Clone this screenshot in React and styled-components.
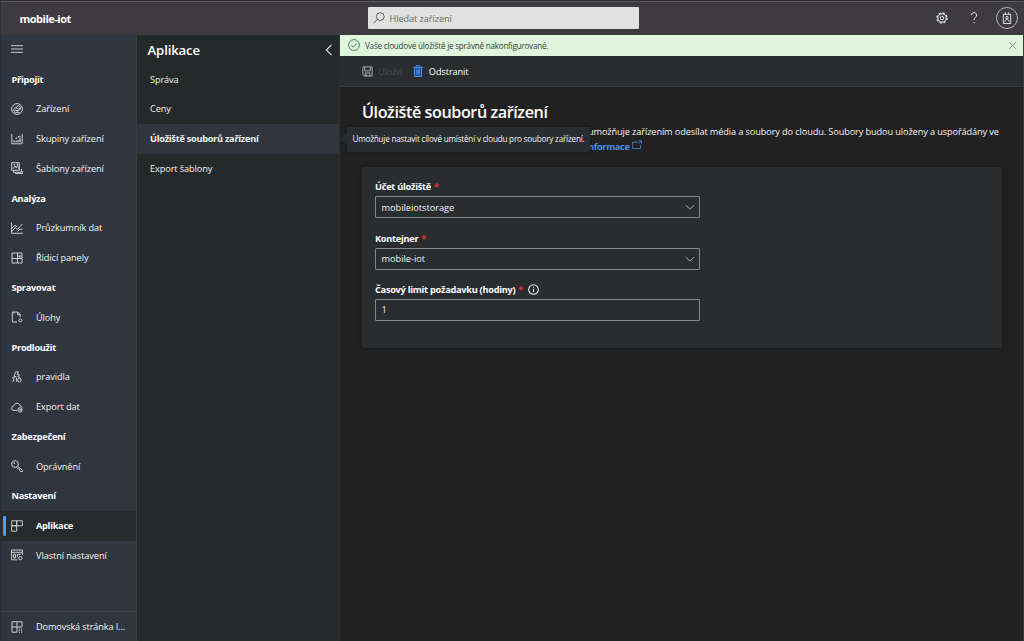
import React from "react";
import styled, { createGlobalStyle, css } from "styled-components";

const GlobalStyle = createGlobalStyle`
  * {
    box-sizing: border-box;
  }

  body {
    margin: 0;
    overflow: hidden;
    background: #212121;
    color: #f3f2f1;
    font-family: "Open Sans", "Noto Sans", sans-serif;
    font-size: 9.2px;
  }
`;

const Page = styled.div`
  width: 1024px;
  height: 641px;
  display: flex;
  flex-direction: column;
  border-top: 1px solid #2b2b2d;
  border-left: 1px solid #26303a;
  border-right: 1px solid #3c3c3e;
`;

const Header = styled.header`
  height: 33.5px;
  flex: none;
  display: flex;
  align-items: center;
  justify-content: space-between;
  background: #3e3b40;
  border-top: 1px solid #5d5b5b;
  padding: 0 5px 0 18.5px;
`;

const Brand = styled.div`
  width: 348px;
  font-size: 11px;
  font-weight: 700;
  color: #fff;
  letter-spacing: -0.5px;
`;

const SearchBox = styled.div`
  width: 271px;
  height: 22px;
  display: flex;
  align-items: center;
  gap: 5px;
  padding-left: 5px;
  background: #e1e1e1;
  border-radius: 1px;
  color: #6a6a6a;
  letter-spacing: -0.08px;
`;

const HeaderTools = styled.div`
  flex: 1;
  display: flex;
  align-items: center;
  justify-content: flex-end;
  gap: 20px;
`;

const Avatar = styled.div`
  width: 22px;
  height: 22px;
  margin-left: -4px;
  display: flex;
  align-items: center;
  justify-content: center;
  border: 1px solid #b5b4b5;
  border-radius: 50%;
`;

const Body = styled.div`
  flex: 1;
  min-height: 0;
  display: flex;
`;

const Sidebar = styled.nav`
  width: 136px;
  flex: none;
  display: flex;
  flex-direction: column;
  background: #30363f;
  border-right: 1px solid #3a3d41;
`;

const SideRow = styled.div`
  height: 29.78px;
  flex: none;
  display: flex;
  align-items: center;
  position: relative;
  padding-left: 10px;
  white-space: nowrap;
  letter-spacing: -0.08px;

  svg {
    margin-right: 13px;
    flex: none;
  }

  ${(props) =>
    props.$heading &&
    css`
      padding-left: 10.5px;
      font-weight: 700;
      color: #fff;
      letter-spacing: -0.27px;
    `}

  ${(props) =>
    props.$active &&
    css`
      background: #272b2d;
      font-weight: 700;
      color: #fff;
      letter-spacing: -0.27px;

      &::before {
        content: "";
        position: absolute;
        left: 2px;
        top: 5px;
        width: 3px;
        height: 20px;
        border-radius: 1px;
        background: #4e9df5;
      }
    `}

  ${(props) =>
    props.$bottom &&
    css`
      margin-top: auto;
      border-top: 1px solid #3d4247;
      letter-spacing: -0.13px;
    `}
`;

const SubPanel = styled.section`
  width: 203px;
  flex: none;
  background: #25292a;
  border-right: 1px solid #2e3132;
`;

const SubTitle = styled.div`
  height: 29.78px;
  display: flex;
  align-items: center;
  justify-content: space-between;
  padding: 2px 4.5px 0 10.5px;
  font-size: 13.2px;
  font-weight: 600;
  color: #fff;
  letter-spacing: -0.15px;
`;

const SubItem = styled.div`
  height: 29.78px;
  display: flex;
  align-items: center;
  padding-left: 13px;
  letter-spacing: ${(props) => (props.$active ? "-0.27px" : "-0.1px")};
  background: ${(props) => (props.$active ? "#30363f" : "transparent")};
  font-weight: ${(props) => (props.$active ? 700 : 400)};
`;

const Main = styled.main`
  flex: 1;
  min-width: 0;
  position: relative;
`;

const Banner = styled.div`
  height: 21.5px;
  display: flex;
  align-items: center;
  gap: 5px;
  padding: 0 6px 0 8px;
  background: #dff6dd;
  color: #3b3d3b;
  font-size: 8.1px;
  letter-spacing: -0.22px;

  svg:last-child {
    margin-left: auto;
  }
`;

const Toolbar = styled.div`
  height: 31px;
  display: flex;
  align-items: center;
  padding-left: 22px;
  background: #292d30;
  border-bottom: 1px solid #3b3a39;
`;

const ToolButton = styled.div`
  display: flex;
  align-items: center;
  gap: 5px;
  margin-right: 10px;
  letter-spacing: -0.1px;
  color: ${(props) => (props.$disabled ? "#494c4e" : "#fff")};
`;

const Content = styled.div`
  padding: 13px 21px 0 22px;
`;

const Heading = styled.h1`
  margin: 0;
  height: 25px;
  line-height: 24px;
  font-size: 16.2px;
  font-weight: 600;
  color: #fff;
  letter-spacing: -0.44px;
`;

const Description = styled.p`
  margin: 0;
  padding-left: 226px;
  line-height: 14.6px;
  white-space: nowrap;
  letter-spacing: -0.112px;
`;

const Link = styled.a`
  color: #4a90ec;
  font-weight: 700;
  letter-spacing: -0.33px;

  svg {
    margin-left: 2px;
  }
`;

const Card = styled.div`
  width: 639.5px;
  height: 181px;
  margin-top: 13px;
  padding: 13px;
  background: #292d30;
  border-radius: 2px;
  box-shadow: 0 1px 4px rgba(0, 0, 0, 0.3);
`;

const Field = styled.div`
  width: 325px;
  height: 51.4px;
`;

const Label = styled.div`
  height: 16px;
  display: flex;
  align-items: center;
  gap: 3px;
  padding-bottom: 2.5px;
  font-weight: 700;
  color: #fff;
  letter-spacing: -0.26px;
  white-space: nowrap;

  svg {
    margin-left: 2px;
  }
`;

const Required = styled.span`
  color: #e8302e;
`;

const Control = styled.div`
  height: 22px;
  display: flex;
  align-items: center;
  justify-content: space-between;
  padding: 0 4px 0 5.5px;
  border: 1px solid #8a8886;
  border-radius: 1px;
`;

const Tooltip = styled.div`
  position: absolute;
  left: 7px;
  top: 92.5px;
  width: 243px;
  height: 24.5px;
  display: flex;
  align-items: center;
  padding: 0 0 1px 5.5px;
  background: #292d30;
  box-shadow: 0 0 4px rgba(0, 0, 0, 0.35);
  font-size: 8.1px;
  letter-spacing: -0.19px;
  white-space: nowrap;

  &::before {
    content: "";
    position: absolute;
    left: -6px;
    top: 6px;
    border: 6px solid transparent;
    border-left-width: 0;
    border-right-color: #292d30;
  }
`;

const paths = {
  menu: <path d="M0 2.7h12M0 6h12M0 9.3h12" />,
  devices: (
    <>
      <circle cx="6" cy="6" r="5.4" />
      <circle cx="7.5" cy="4.4" r="1.7" />
      <circle cx="4.9" cy="8.5" r="1.4" />
      <path d="M5.9 4.4 3.5 5.4 2 8M6 7.6l2.6-.6 1.6-2.4M6.2 9.2l2.3.4" />
    </>
  ),
  groups: (
    <>
      <path d="M.8 1v9.8h10.4V1" />
      <path d="M3 7.2v2M5.2 4.6v1.5M5.2 7.6v1.6M7.2 7.2v2M9 2.8v1.5M9 5.6v3.6M6.8 4h1.2" strokeWidth="1.3" />
    </>
  ),
  templates: (
    <>
      <path d="M.7.7h7.6v7.6H.7zM2.5 8.5v1.8h7.8V7M4.5 10.5v1h7.2V9" />
      <path d="m2 6.8 2-3 1.2 2 1.3-2 1.2 3M2.6 2.6h1.4M5.5 2.2H7v1.6" />
    </>
  ),
  explorer: <path d="M.6.5v10.8H12M.8 9.5l3.5-4 2 2L11.3 2M1 6l3-2.5 2.3 1.2M6.5 9.5l2-2 2.8-.5" />,
  dashboards: <path d="M1 1h10v10H1zM6.5 1v10M1 6.5h10M6.5 4H11M8.8 4v2.5" />,
  jobs: (
    <>
      <path d="M6 11H1.3V1h5.4l2.5 2.5V6M6.7 1v2.7h2.5M3 1v1.5" />
      <circle cx="9.4" cy="9.4" r="1.5" />
    </>
  ),
  rules: (
    <>
      <path d="M2.8 5.5 4.8.8h2.7L6.2 3.7h2.2L6.6 6M2.8 5.5h2L3.4 7H1.4l1.8 1.7L1.6 11" />
      <circle cx="8.4" cy="9.2" r="1.8" />
      <path d="M5.6 6.5v4.2M7 6.2h2.2" />
    </>
  ),
  exportData: (
    <>
      <path d="M6 9.4H2.8a2.2 2.2 0 0 1 0-4.4C3 3.3 4.4 2.3 6 2.3c1.8 0 3 1 3.3 2.7 1 0 1.9.6 2 1.6" />
      <circle cx="9" cy="8.9" r="2.2" />
      <path d="M7.5 8.9h2.8M9.3 7.8l1.1 1.1-1.1 1.1" />
    </>
  ),
  key: (
    <>
      <circle cx="4" cy="4" r="3.4" />
      <path d="m6.6 6.3 4.8 4v1.2H9.6L8.5 10.2V9.1H7.4L5.6 7.3" />
      <circle cx="3.2" cy="3.2" r=".5" />
    </>
  ),
  app: <path d="M.7.8h5v5h-5zM.7 5.8h5v5.4h-5zM5.7.8h5.6v5H5.7z" />,
  settings: (
    <>
      <path d="M11.4 6V1H.6v9.8h5.8M.6 3.3h10.8M2.5 5.3h2v3.5h-2zM6 5.3h3.8M6.4 5.3v3" />
      <circle cx="9.3" cy="9.2" r="1.7" />
    </>
  ),
  home: (
    <>
      <path d="M11 5.8V.8H1v10.4h5M6 .8v10.4M1 6h10" />
      <path d="M7.8 8h1.2M10 8h1.2M7.8 9.6h1.2M10 9.6h1.2M7.8 11.2h1.2M10 11.2h1.2" />
    </>
  ),
  search: (
    <>
      <circle cx="7.3" cy="4.6" r="3.9" />
      <path d="M4.4 7.3.6 11.2" />
    </>
  ),
  gear: (
    <>
      <circle cx="6" cy="6" r="5" strokeWidth="1.4" strokeDasharray="2.1 1.827" />
      <circle cx="6" cy="6" r="4.1" />
      <circle cx="6" cy="6" r="1.8" />
    </>
  ),
  help: (
    <>
      <path d="M3.4 3.3C3.5 1.6 4.6.6 6 .6s2.6 1 2.6 2.5C8.6 5.4 6 5.6 6 8.2" />
      <path d="M6 10.2v1.2" />
    </>
  ),
  badge: (
    <>
      <path d="M2.3 2.3h7.4v9.2H2.3zM4.3.3v2.6M7.7.3v2.6" />
      <circle cx="6" cy="5.6" r="1.2" />
      <path d="M4 9.8c0-3.4 4-3.4 4 0" />
    </>
  ),
  back: <path d="M8.5.8 3.3 6l5.2 5.2" />,
  check: (
    <>
      <circle cx="6" cy="6" r="5.4" />
      <path d="m3.2 6.2 2 2 3.8-4" />
    </>
  ),
  close: <path d="m1.5 1.5 9 9M10.5 1.5l-9 9" />,
  save: <path d="M1 1h10v10H2.5L1 9.5zM3 1v4.3h6V1M3.5 11V7.5h5V11M5 9v2" />,
  trash: (
    <>
      <path d="M2.4 2.5h7.2v9H2.4z" fill="#24549c" />
      <path d="M1 2.4h10M4.2 2.2V.6h3.6v1.6M4.7 4.5v5M6 4.5v5M7.3 4.5v5" />
    </>
  ),
  external: <path d="M7 2.5H.8v7.8h9.5V6M8 1h3.3v3.3M11 1.2 8 4.2" />,
  down: <path d="m1 3.7 5 5 5-5" />,
  info: (
    <>
      <circle cx="6" cy="6" r="5.3" />
      <path d="M6 5.2V9M6 3v1.1" />
    </>
  ),
};

function Icon({ name, size = 12, color = "#d4d5d6", weight = 0.95 }) {
  return (
    <svg width={size} height={size} viewBox="0 0 12 12" fill="none" stroke={color} strokeWidth={weight}>
      {paths[name]}
    </svg>
  );
}

const sideItems = [
  { title: "Připojit" },
  { title: "Zařízení", icon: "devices" },
  { title: "Skupiny zařízení", icon: "groups" },
  { title: "Šablony zařízení", icon: "templates" },
  { title: "Analýza" },
  { title: "Průzkumník dat", icon: "explorer" },
  { title: "Řídicí panely", icon: "dashboards" },
  { title: "Spravovat" },
  { title: "Úlohy", icon: "jobs" },
  { title: "Prodloužit" },
  { title: "pravidla", icon: "rules" },
  { title: "Export dat", icon: "exportData" },
  { title: "Zabezpečení" },
  { title: "Oprávnění", icon: "key" },
  { title: "Nastavení" },
  { title: "Aplikace", icon: "app", active: true },
  { title: "Vlastní nastavení", icon: "settings" },
];

const subItems = ["Správa", "Ceny", "Úložiště souborů zařízení", "Export šablony"];

export default function App() {
  const sideRows = sideItems.map((item) => (
    <SideRow key={item.title} $heading={!item.icon} $active={item.active}>
      {item.icon && <Icon name={item.icon} />}
      {item.title}
    </SideRow>
  ));

  return (
    <Page>
      <GlobalStyle />
      <Header>
        <Brand>mobile-iot</Brand>
        <SearchBox>
          <Icon name="search" color="#555" />
          Hledat zařízení
        </SearchBox>
        <HeaderTools>
          <Icon name="gear" color="#e8e8e8" />
          <Icon name="help" color="#e8e8e8" />
          <Avatar>
            <Icon name="badge" color="#e8e8e8" />
          </Avatar>
        </HeaderTools>
      </Header>

      <Body>
        <Sidebar>
          <SideRow>
            <Icon name="menu" />
          </SideRow>
          {sideRows}
          <SideRow $bottom>
            <Icon name="home" />
            Domovská stránka I...
          </SideRow>
        </Sidebar>

        <SubPanel>
          <SubTitle>
            Aplikace
            <Icon name="back" size={12} color="#e8e8e8" weight={1.1} />
          </SubTitle>
          {subItems.map((title) => (
            <SubItem key={title} $active={title === "Úložiště souborů zařízení"}>
              {title}
            </SubItem>
          ))}
        </SubPanel>

        <Main>
          <Banner>
            <Icon name="check" color="#46814a" />
            Vaše cloudové úložiště je správně nakonfigurované.
            <Icon name="close" size={9} color="#6b736b" />
          </Banner>
          <Toolbar>
            <ToolButton $disabled>
              <Icon name="save" color="#b9b6bd" size={11} />
              Uložit
            </ToolButton>
            <ToolButton>
              <Icon name="trash" color="#4a90ec" />
              Odstranit
            </ToolButton>
          </Toolbar>
          <Content>
            <Heading>Úložiště souborů zařízení</Heading>
            <Description>
              umožňuje zařízením odesílat média a soubory do cloudu. Soubory budou uloženy a uspořádány ve
              <br />
              <Link>
                nformace
                <Icon name="external" color="#4a90ec" size={10} />
              </Link>
            </Description>
            <Card>
              <Field>
                <Label>
                  Účet úložiště <Required>*</Required>
                </Label>
                <Control>
                  mobileiotstorage
                  <Icon name="down" size={10} />
                </Control>
              </Field>
              <Field>
                <Label>
                  Kontejner <Required>*</Required>
                </Label>
                <Control>
                  mobile-iot
                  <Icon name="down" size={10} />
                </Control>
              </Field>
              <Field>
                <Label>
                  Časový limit požadavku (hodiny) <Required>*</Required>
                  <Icon name="info" size={11} color="#f0f0f0" weight={1.1} />
                </Label>
                <Control>1</Control>
              </Field>
            </Card>
          </Content>
          <Tooltip>Umožňuje nastavit cílové umístění v cloudu pro soubory zařízení.</Tooltip>
        </Main>
      </Body>
    </Page>
  );
}
